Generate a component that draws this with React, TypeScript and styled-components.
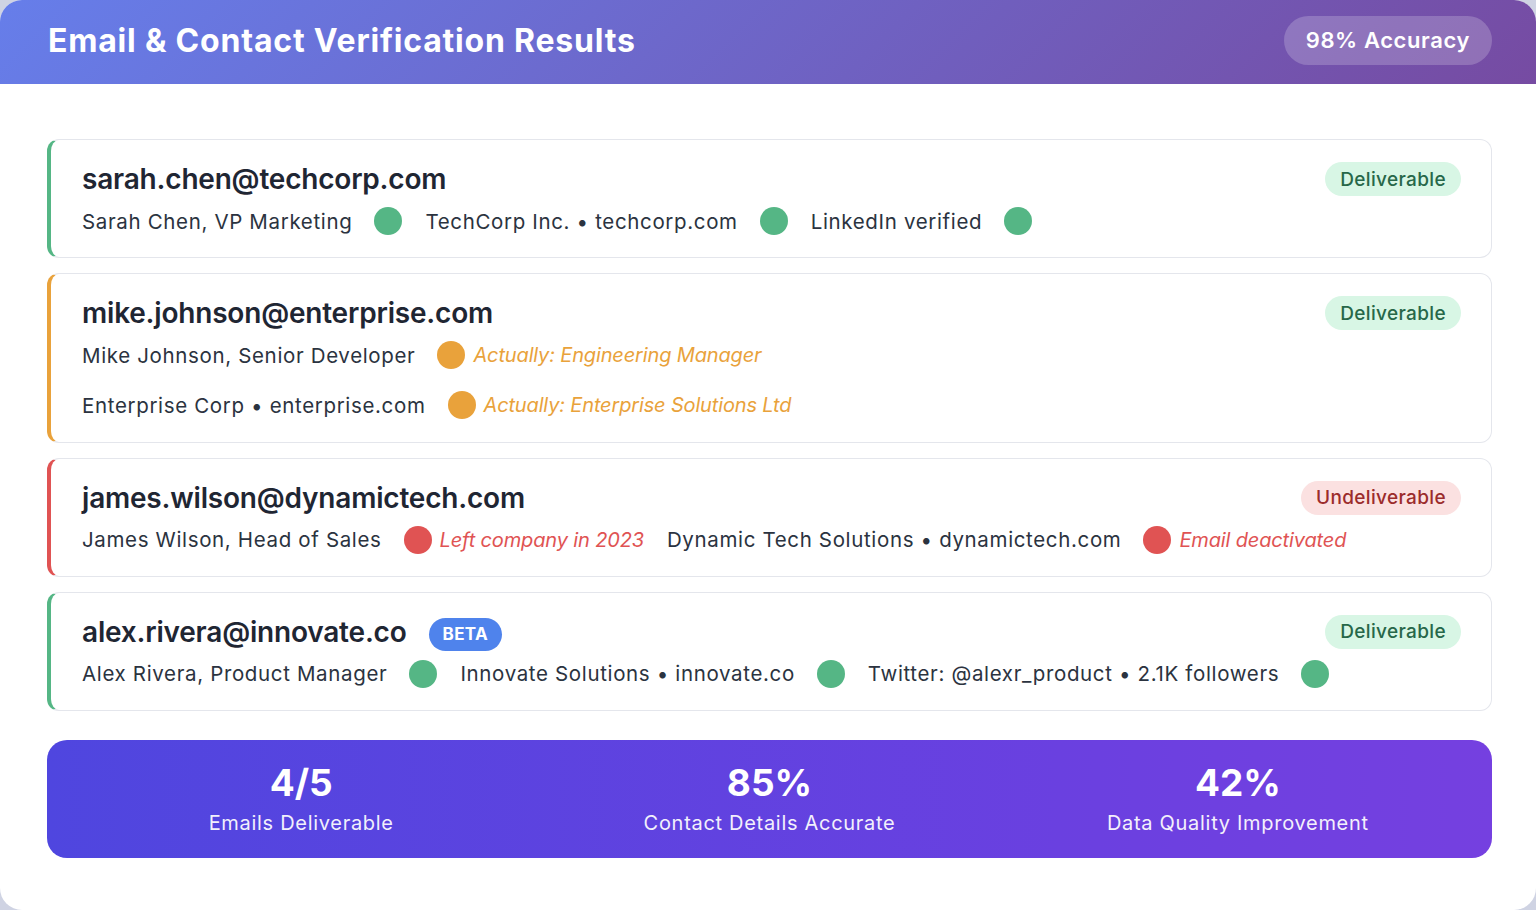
import React from "react";
import styled, { createGlobalStyle } from "styled-components";

type Tone = "good" | "warn" | "bad";

const toneColor: Record<Tone, string> = {
  good: "#55b685",
  warn: "#e9a23b",
  bad: "#e05353",
};

const results = [
  {
    email: "sarah.chen@techcorp.com",
    status: "Deliverable",
    accent: "good" as Tone,
    items: [
      { text: "Sarah Chen, VP Marketing", tone: "good" as Tone },
      { text: "TechCorp Inc. • techcorp.com", tone: "good" as Tone },
      { text: "LinkedIn verified", tone: "good" as Tone },
    ],
  },
  {
    email: "mike.johnson@enterprise.com",
    status: "Deliverable",
    accent: "warn" as Tone,
    items: [
      {
        text: "Mike Johnson, Senior Developer",
        tone: "warn" as Tone,
        note: "Actually: Engineering Manager",
      },
      {
        text: "Enterprise Corp • enterprise.com",
        tone: "warn" as Tone,
        note: "Actually: Enterprise Solutions Ltd",
      },
    ],
  },
  {
    email: "james.wilson@dynamictech.com",
    status: "Undeliverable",
    accent: "bad" as Tone,
    items: [
      {
        text: "James Wilson, Head of Sales",
        tone: "bad" as Tone,
        note: "Left company in 2023",
      },
      {
        text: "Dynamic Tech Solutions • dynamictech.com",
        tone: "bad" as Tone,
        note: "Email deactivated",
      },
    ],
  },
  {
    email: "alex.rivera@innovate.co",
    status: "Deliverable",
    accent: "good" as Tone,
    beta: true,
    items: [
      { text: "Alex Rivera, Product Manager", tone: "good" as Tone },
      { text: "Innovate Solutions • innovate.co", tone: "good" as Tone },
      {
        text: "Twitter: @alexr_product • 2.1K followers",
        tone: "good" as Tone,
      },
    ],
  },
];

const stats = [
  { value: "4/5", label: "Emails Deliverable" },
  { value: "85%", label: "Contact Details Accurate" },
  { value: "42%", label: "Data Quality Improvement" },
];

const App = () => {
  return (
    <>
      <GlobalStyle />
      <Panel>
        <Header>
          <Title>Email &amp; Contact Verification Results</Title>
          <AccuracyBadge>98% Accuracy</AccuracyBadge>
        </Header>
        <Content>
          <CardList>
            {results.map((each, index) => (
              <ResultCard key={index} $accent={toneColor[each.accent]}>
                <CardTop>
                  <EmailLine>
                    <Email>{each.email}</Email>
                    {each.beta && <Beta>BETA</Beta>}
                  </EmailLine>
                  <StatusBadge $ok={each.status === "Deliverable"}>
                    {each.status}
                  </StatusBadge>
                </CardTop>
                <DetailRow>
                  {each.items.map((item, i) => (
                    <DetailItem key={i}>
                      <DetailText>{item.text}</DetailText>
                      <Dot $color={toneColor[item.tone]} />
                      {item.note && (
                        <Note $color={toneColor[item.tone]}>{item.note}</Note>
                      )}
                    </DetailItem>
                  ))}
                </DetailRow>
              </ResultCard>
            ))}
          </CardList>
          <StatsBar>
            {stats.map((each) => (
              <Stat key={each.label}>
                <StatValue>{each.value}</StatValue>
                <StatLabel>{each.label}</StatLabel>
              </Stat>
            ))}
          </StatsBar>
        </Content>
      </Panel>
    </>
  );
};

const GlobalStyle = createGlobalStyle`
  html, body {
    margin: 0;
    padding: 0;
    background: #cfd3e3;
    font-family: "Inter", "Noto Sans", sans-serif;
  }
  * {
    box-sizing: border-box;
  }
`;

const Panel = styled.div`
  width: 1536px;
  height: 910px;
  background: white;
  border-radius: 22px;
  overflow: hidden;
`;

const Header = styled.div`
  display: flex;
  height: 84px;
  padding: 0 44px 4px 48px;
  justify-content: space-between;
  align-items: center;
  background: linear-gradient(135deg, #667eea 0%, #764ba2 100%);
`;

const Title = styled.h1`
  margin: 0;
  color: white;
  font-size: 32px;
  font-weight: 700;
  letter-spacing: 0.8px;
`;

const AccuracyBadge = styled.div`
  display: flex;
  height: 49px;
  padding: 0 22px;
  align-items: center;
  background: rgba(255, 255, 255, 0.2);
  border-radius: 25px;
  color: white;
  font-size: 22px;
  font-weight: 600;
  letter-spacing: 0.6px;
`;

const Content = styled.div`
  display: flex;
  flex-direction: column;
  padding: 55px 44px 0 47px;
  gap: 29px;
`;

const CardList = styled.div`
  display: flex;
  flex-direction: column;
  gap: 15px;
`;

const ResultCard = styled.div<{ $accent: string }>`
  display: flex;
  flex-direction: column;
  gap: 11px;
  padding: 22px 30px 22.3px 31px;
  border: 1.5px solid #e4e6ec;
  border-left: 4px solid ${({ $accent }) => $accent};
  border-radius: 12px;
  background: white;
`;

const CardTop = styled.div`
  display: flex;
  height: 34px;
  justify-content: space-between;
  align-items: center;
`;

const EmailLine = styled.div`
  display: flex;
  align-items: center;
  gap: 22px;
`;

const Email = styled.div`
  color: #1f2633;
  font-size: 28px;
  font-weight: 600;
  letter-spacing: -0.2px;
`;

const Beta = styled.div`
  display: flex;
  height: 33px;
  margin-top: 5px;
  padding: 0 14px;
  align-items: center;
  background: #4f83ec;
  border-radius: 17px;
  color: white;
  font-size: 17px;
  font-weight: 700;
  letter-spacing: 0.3px;
`;

const StatusBadge = styled.div<{ $ok: boolean }>`
  display: flex;
  height: 34px;
  padding: 0 15px;
  align-items: center;
  border-radius: 17px;
  background: ${({ $ok }) => ($ok ? "#d8f6e5" : "#fbe1e1")};
  color: ${({ $ok }) => ($ok ? "#276749" : "#9b2c2c")};
  font-size: 19px;
  font-weight: 500;
  letter-spacing: 0.35px;
`;

const DetailRow = styled.div`
  display: flex;
  flex-wrap: wrap;
  column-gap: 23px;
  row-gap: 22px;
`;

const DetailItem = styled.div`
  display: flex;
  height: 28px;
  align-items: center;
`;

const DetailText = styled.span`
  color: #2b3340;
  font-size: 20.5px;
  letter-spacing: 0.65px;
`;

const Dot = styled.span<{ $color: string }>`
  width: 28px;
  height: 28px;
  margin-left: 22px;
  border-radius: 50%;
  background: ${({ $color }) => $color};
`;

const Note = styled.span<{ $color: string }>`
  margin-left: 8px;
  color: ${({ $color }) => $color};
  font-size: 20px;
  font-style: italic;
  letter-spacing: -0.15px;
`;

const StatsBar = styled.div`
  display: grid;
  grid-template-columns: repeat(3, 1fr);
  height: 118px;
  padding: 20px;
  align-items: center;
  border-radius: 20px;
  background: linear-gradient(90deg, #4f46df 0%, #6a40e0 70%, #7540e0 100%);
`;

const Stat = styled.div`
  display: flex;
  flex-direction: column;
  align-items: center;
  gap: 4px;
  color: white;
`;

const StatValue = styled.div`
  font-size: 37px;
  font-weight: 700;
  line-height: 44px;
`;

const StatLabel = styled.div`
  font-size: 20px;
  line-height: 28px;
  letter-spacing: 0.7px;
  opacity: 0.92;
`;

export default App;
